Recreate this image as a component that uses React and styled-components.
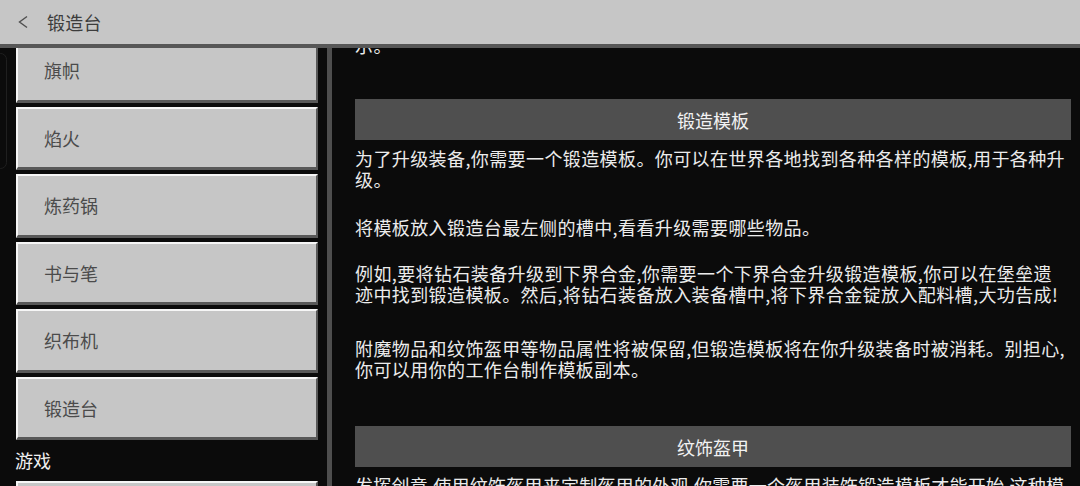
import React, { useLayoutEffect, useRef } from "react";
import styled, { createGlobalStyle } from "styled-components";

const GlobalStyle = createGlobalStyle`
  html, body {
    margin: 0;
    padding: 0;
    background: #0b0b0b;
  }
  body {
    font-family: "Noto Sans CJK SC", "Noto Sans", sans-serif;
  }
`;

const Screen = styled.div`
  width: 1080px;
  height: 486px;
  display: flex;
  flex-direction: column;
  overflow: hidden;
  background: #0b0b0b;
`;

const TopBar = styled.header`
  flex: none;
  height: 44px;
  display: flex;
  align-items: center;
  gap: 18px;
  padding-left: 17px;
  background: #c6c6c6;
  border-bottom: 4px solid #575757;
`;

const BackButton = styled.button`
  display: flex;
  align-items: center;
  padding: 0;
  border: none;
  background: none;
  cursor: pointer;
`;

const Title = styled.h1`
  margin: 0;
  font-size: 18px;
  font-weight: 400;
  color: #3c3c3c;
  letter-spacing: 0.2px;
`;

const Body = styled.div`
  flex: 1;
  min-height: 0;
  display: flex;
`;

const Sidebar = styled.nav`
  position: relative;
  flex: none;
  width: 327px;
  background: #0b0b0b;
`;

const EdgeNotch = styled.div`
  position: absolute;
  left: -6px;
  top: 5px;
  width: 11px;
  height: 114px;
  border: 1px solid #1f1f1f;
  border-radius: 7px;
  pointer-events: none;
`;

const SideScroll = styled.div`
  height: 100%;
  box-sizing: border-box;
  overflow: hidden;
  display: flex;
  flex-direction: column;
  gap: 4px;
  padding: 4px 9px 0 16px;
`;

const MenuButton = styled.button`
  flex: none;
  height: 63.5px;
  box-sizing: border-box;
  display: flex;
  align-items: center;
  padding: 0 0 0 26px;
  background: #c6c6c6;
  border-style: solid;
  border-width: 2px 2px 3px 2px;
  border-color: #f6f6f6 #585858 #585858 #f6f6f6;
  font-family: inherit;
  font-size: 18px;
  color: #4b4b4b;
  text-align: left;
  cursor: pointer;
`;

const GroupLabel = styled.div`
  flex: none;
  height: 32.5px;
  display: flex;
  align-items: center;
  margin-left: -1px;
  font-size: 18px;
  color: #f0f0f0;
`;

const Divider = styled.div`
  flex: none;
  width: 5px;
  background: #4e4e4e;
`;

const Content = styled.main`
  flex: 1;
  min-width: 0;
  overflow: hidden;
  box-sizing: border-box;
  padding: 16px 9px 0 23px;
`;

const Section = styled.section`
  margin-top: 46px;
`;

const SectionBar = styled.h2`
  margin: 0;
  height: 41px;
  display: flex;
  align-items: center;
  justify-content: center;
  background: #4f4f4f;
  font-size: 18px;
  font-weight: 400;
  color: #f2f2f2;
`;

const Paragraph = styled.p`
  margin: ${(p) => p.$space ?? 27}px 0 0;
  width: 713px;
  font-size: 18px;
  line-height: 21px;
  letter-spacing: ${(p) => p.$tracking ?? 0.4}px;
  color: #ececec;
`;

const Intro = styled(Paragraph)`
  margin-bottom: -3px;
`;

const ChevronLeft = () => (
  <svg width="12" height="14" viewBox="0 0 12 14" fill="none">
    <polyline points="10,1.5 2.5,7 10,12.5" stroke="#4f4f4f" strokeWidth="1.4" />
  </svg>
);

const blockItems = ["信标", "铁砧", "旗帜", "焰火", "炼药锅", "书与笔", "织布机", "锻造台"];
const gameItems = ["游戏模式"];

const sections = [
  {
    title: "锻造模板",
    paragraphs: [
      { space: 8, text: "为了升级装备,你需要一个锻造模板。你可以在世界各地找到各种各样的模板,用于各种升级。" },
      { space: 27, text: "将模板放入锻造台最左侧的槽中,看看升级需要哪些物品。" },
      { space: 25, text: "例如,要将钻石装备升级到下界合金,你需要一个下界合金升级锻造模板,你可以在堡垒遗迹中找到锻造模板。然后,将钻石装备放入装备槽中,将下界合金锭放入配料槽,大功告成!" },
      { space: 33, text: "附魔物品和纹饰盔甲等物品属性将被保留,但锻造模板将在你升级装备时被消耗。别担心,你可以用你的工作台制作模板副本。" },
    ],
  },
  {
    title: "纹饰盔甲",
    paragraphs: [
      { space: 8, tracking: 0.25, text: "发挥创意,使用纹饰盔甲来定制盔甲的外观,你需要一个盔甲装饰锻造模板才能开始,这种模板可以在各种建筑结构中找到。" },
    ],
  },
];

export default function App() {
  const sideRef = useRef(null);
  const contentRef = useRef(null);

  // the screen shows both panes partly scrolled
  useLayoutEffect(() => {
    if (sideRef.current) sideRef.current.scrollTop = 148;
    if (contentRef.current) contentRef.current.scrollTop = 50;
  }, []);

  return (
    <Screen>
      <GlobalStyle />
      <TopBar>
        <BackButton aria-label="返回">
          <ChevronLeft />
        </BackButton>
        <Title>锻造台</Title>
      </TopBar>
      <Body>
        <Sidebar>
          <SideScroll ref={sideRef}>
            {blockItems.map((item) => (
              <MenuButton key={item}>{item}</MenuButton>
            ))}
            <GroupLabel>游戏</GroupLabel>
            {gameItems.map((item) => (
              <MenuButton key={item}>{item}</MenuButton>
            ))}
          </SideScroll>
          <EdgeNotch />
        </Sidebar>
        <Divider />
        <Content ref={contentRef}>
          <Intro $space={0}>锻造台的用途,可升级你的钻石装备。也可以为盔甲添加各种各样的纹饰图案,更加适合展示。</Intro>
          {sections.map((section) => (
            <Section key={section.title}>
              <SectionBar>{section.title}</SectionBar>
              {section.paragraphs.map((para, index) => (
                <Paragraph key={index} $space={para.space} $tracking={para.tracking}>
                  {para.text}
                </Paragraph>
              ))}
            </Section>
          ))}
        </Content>
      </Body>
    </Screen>
  );
}
